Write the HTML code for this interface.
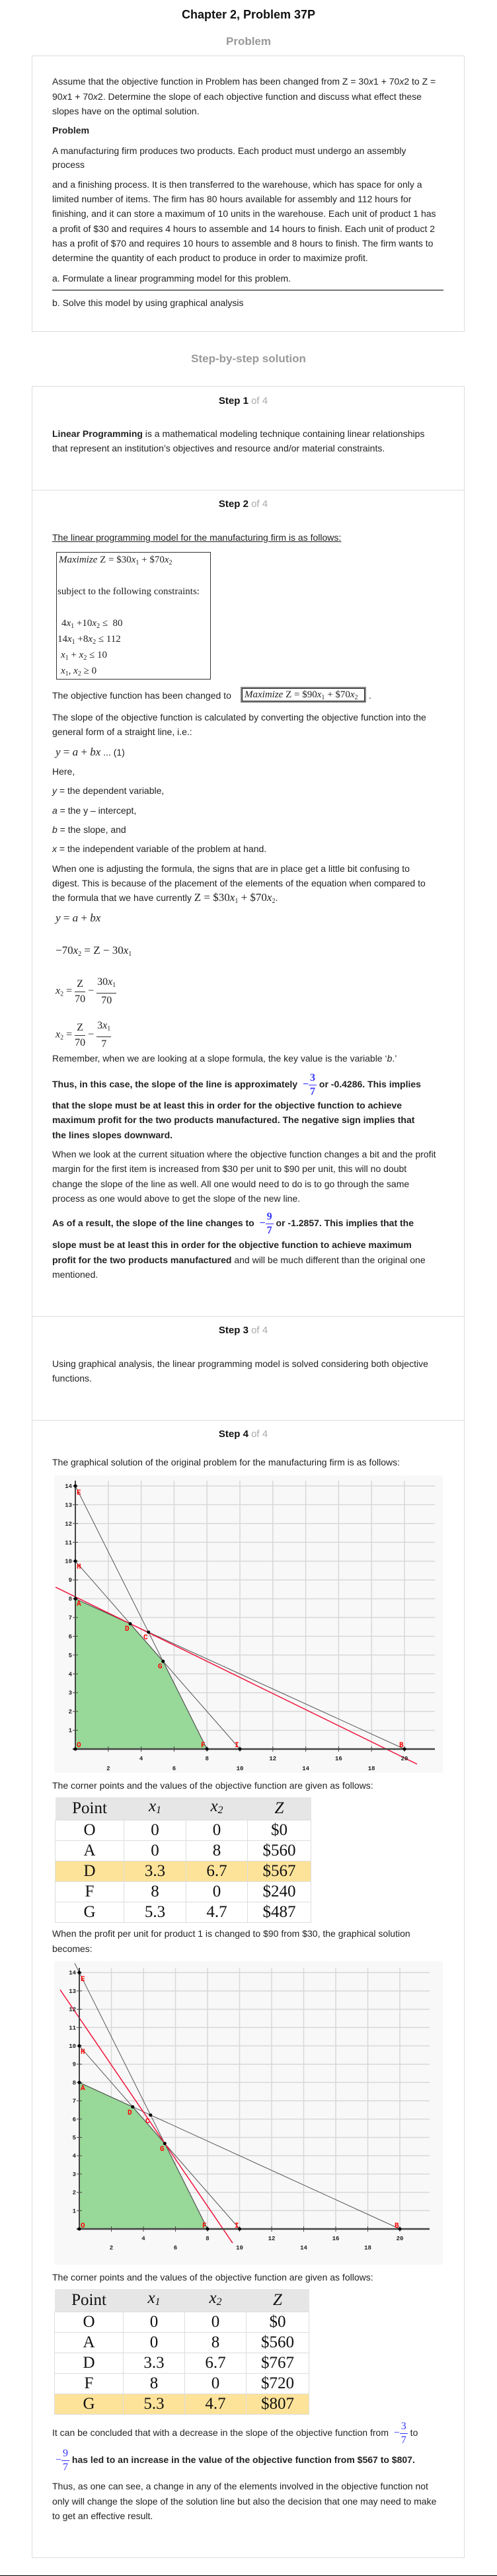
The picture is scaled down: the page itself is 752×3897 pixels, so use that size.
<!DOCTYPE html>
<html><head><meta charset="utf-8">
<style>
*{margin:0;padding:0;box-sizing:border-box}
body{width:752px;height:3897px;position:relative;background:#fff;font-family:"Liberation Sans",Arial,sans-serif;color:#222;overflow:hidden;border-bottom:1px solid #000}
.a{position:absolute}
.t{position:absolute;left:79px;font-size:14px;line-height:22px;white-space:nowrap;color:#222}
.b{font-weight:bold}
.c{position:absolute;left:0;width:752px;text-align:center;font-weight:bold}
.box{position:absolute;left:48px;width:655px;border:1px solid #ddd}
.div{position:absolute;left:48px;width:655px;border-top:1px solid #ddd}
.step{position:absolute;left:48px;width:640px;text-align:center;font-size:15px;font-weight:bold;color:#111;line-height:20px}
.step span{color:#aaa;font-weight:normal}
.m{font-family:"Liberation Serif","Times New Roman",serif;font-size:17px;color:#222;white-space:nowrap}
.m i{font-style:italic}
.mb{font-size:15px}
sub{font-size:10px;vertical-align:-3px}
.fr{display:inline-block;vertical-align:middle;text-align:center;font-family:"Liberation Serif",serif;font-size:16px;line-height:22px}
.fr .n{display:block;border-bottom:1px solid #333;padding:0 1px}
.bf{display:inline-block;vertical-align:middle;text-align:center;font-family:"Liberation Serif",serif;font-size:16px;line-height:20px;color:#33f}
.bf .n{display:block;border-bottom:1px solid #33f;padding:0 2px}
table{position:absolute;border-collapse:collapse;font-family:"Liberation Serif",serif;font-size:25px}
td,th{text-align:center;border:1px solid #ddd;height:31px;line-height:28px;font-weight:normal;color:#111}
th{background:#e6e6e6;border:none;height:33px}
th i,td i{font-style:italic}
.hl td{background:#fde39a}
</style></head><body>

<div class="c" style="top:11px;font-size:18px;line-height:22px;color:#111">Chapter 2, Problem 37P</div>
<div class="c" style="top:52px;font-size:17px;line-height:22px;color:#999">Problem</div>

<div class="box" style="top:84px;height:418px"></div>
<div class="t" style="top:112px">Assume that the objective function in Problem has been changed from Z = 30<i>x</i>1 + 70<i>x</i>2 to Z =</div>
<div class="t" style="top:135px">90<i>x</i>1 + 70<i>x</i>2. Determine the slope of each objective function and discuss what effect these</div>
<div class="t" style="top:157px">slopes have on the optimal solution.</div>
<div class="t b" style="top:186px">Problem</div>
<div class="t" style="top:217px">A manufacturing firm produces two products. Each product must undergo an assembly</div>
<div class="t" style="top:238px">process</div>
<div class="t" style="top:268px">and a finishing process. It is then transferred to the warehouse, which has space for only a</div>
<div class="t" style="top:290px">limited number of items. The firm has 80 hours available for assembly and 112 hours for</div>
<div class="t" style="top:312px">finishing, and it can store a maximum of 10 units in the warehouse. Each unit of product 1 has</div>
<div class="t" style="top:335px">a profit of $30 and requires 4 hours to assemble and 14 hours to finish. Each unit of product 2</div>
<div class="t" style="top:357px">has a profit of $70 and requires 10 hours to assemble and 8 hours to finish. The firm wants to</div>
<div class="t" style="top:379px">determine the quantity of each product to produce in order to maximize profit.</div>
<div class="t" style="top:410px">a. Formulate a linear programming model for this problem.</div>
<div class="a" style="left:79px;top:438px;width:592px;height:2px;background:#777"></div>
<div class="t" style="top:447px">b. Solve this model by using graphical analysis</div>

<div class="c" style="top:532px;font-size:17px;line-height:22px;color:#999">Step-by-step solution</div>

<div class="box" style="top:584px;height:3286px"></div>
<div class="step" style="top:597px">Step 1 <span>of 4</span></div>
<div class="t" style="top:645px"><b>Linear Programming</b> is a mathematical modeling technique containing linear relationships</div>
<div class="t" style="top:667px">that represent an institution’s objectives and resource and/or material constraints.</div>
<div class="div" style="top:741px"></div>
<div class="step" style="top:753px">Step 2 <span>of 4</span></div>
<div class="t" style="top:802px;text-decoration:underline">The linear programming model for the manufacturing firm is as follows:</div>

<div class="a" style="left:85px;top:835px;width:234px;height:193px;border:1px solid #333"></div>
<div class="a m mb" style="left:89px;top:836px;line-height:22px"><i>Maximize</i> Z = $30<i>x</i><sub>1</sub> + $70<i>x</i><sub>2</sub></div>
<div class="a m mb" style="left:87px;top:884px;line-height:22px">subject to the following constraints:</div>
<div class="a m mb" style="left:93px;top:932px;line-height:22px">4<i>x</i><sub>1</sub> +10<i>x</i><sub>2</sub> ≤ &nbsp;80</div>
<div class="a m mb" style="left:87px;top:956px;line-height:22px">14<i>x</i><sub>1</sub> +8<i>x</i><sub>2</sub> ≤ 112</div>
<div class="a m mb" style="left:92px;top:980px;line-height:22px"><i>x</i><sub>1</sub> + <i>x</i><sub>2</sub> ≤ 10</div>
<div class="a m mb" style="left:92px;top:1004px;line-height:22px"><i>x</i><sub>1</sub>, <i>x</i><sub>2</sub> ≥ 0</div>

<div class="t" style="top:1041px">The objective function has been changed to</div>
<div class="a m mb" style="left:364px;top:1039px;width:190px;height:24px;border:2px solid #888;outline:1px solid #222;outline-offset:-3px;line-height:20px;padding-left:4px"><i>Maximize</i> Z = $90<i>x</i><sub>1</sub> + $70<i>x</i><sub>2</sub></div>
<div class="t" style="top:1041px;left:558px">.</div>
<div class="t" style="top:1074px">The slope of the objective function is calculated by converting the objective function into the</div>
<div class="t" style="top:1096px">general form of a straight line, i.e.:</div>
<div class="t" style="top:1127px;left:84px"><span class="m"><i>y</i> = <i>a</i> + <i>bx</i></span> ... (1)</div>
<div class="t" style="top:1156px">Here,</div>
<div class="t" style="top:1185px"><i>y</i> = the dependent variable,</div>
<div class="t" style="top:1215px"><i>a</i> = the y – intercept,</div>
<div class="t" style="top:1244px"><i>b</i> = the slope, and</div>
<div class="t" style="top:1273px"><i>x</i> = the independent variable of the problem at hand.</div>
<div class="t" style="top:1303px">When one is adjusting the formula, the signs that are in place get a little bit confusing to</div>
<div class="t" style="top:1325px">digest. This is because of the placement of the elements of the equation when compared to</div>
<div class="t" style="top:1347px">the formula that we have currently <span class="m">Z = $30<i>x</i><sub>1</sub> + $70<i>x</i><sub>2</sub></span>.</div>
<div class="t m" style="top:1378px;left:84px"><i>y</i> = <i>a</i> + <i>bx</i></div>
<div class="t m" style="top:1427px;left:84px">−70<i>x</i><sub>2</sub> = Z − 30<i>x</i><sub>1</sub></div>
<div class="a m" style="left:84px;top:1475px;font-size:16px;line-height:22px"><i>x</i><sub>2</sub> = <span class="fr"><span class="n">Z</span><span>70</span></span> − <span class="fr"><span class="n">30<i>x</i><sub>1</sub></span><span>70</span></span></div>
<div class="a m" style="left:84px;top:1541px;font-size:16px;line-height:22px"><i>x</i><sub>2</sub> = <span class="fr"><span class="n">Z</span><span>70</span></span> − <span class="fr"><span class="n">3<i>x</i><sub>1</sub></span><span>7</span></span></div>
<div class="t" style="top:1590px">Remember, when we are looking at a slope formula, the key value is the variable ‘<i>b</i>.’</div>
<div class="t b" style="top:1620px;line-height:40px">Thus, in this case, the slope of the line is approximately &nbsp;<span class="bf">−<span style="display:inline-block;vertical-align:middle"><span class="n">3</span><span>7</span></span></span> or -0.4286. This implies</div>
<div class="t b" style="top:1661px">that the slope must be at least this in order for the objective function to achieve</div>
<div class="t b" style="top:1683px">maximum profit for the two products manufactured. The negative sign implies that</div>
<div class="t b" style="top:1706px">the lines slopes downward.</div>
<div class="t" style="top:1735px">When we look at the current situation where the objective function changes a bit and the profit</div>
<div class="t" style="top:1757px">margin for the first item is increased from $30 per unit to $90 per unit, this will no doubt</div>
<div class="t" style="top:1780px">change the slope of the line as well. All one would need to do is to go through the same</div>
<div class="t" style="top:1802px">process as one would above to get the slope of the new line.</div>
<div class="t b" style="top:1830px;line-height:40px">As of a result, the slope of the line changes to &nbsp;<span class="bf">−<span style="display:inline-block;vertical-align:middle"><span class="n">9</span><span>7</span></span></span> or -1.2857. This implies that the</div>
<div class="t" style="top:1872px"><b>slope must be at least this in order for the objective function to achieve maximum</b></div>
<div class="t" style="top:1895px"><b>profit for the two products manufactured</b> and will be much different than the original one</div>
<div class="t" style="top:1917px">mentioned.</div>

<div class="div" style="top:1991px"></div>
<div class="step" style="top:2003px">Step 3 <span>of 4</span></div>
<div class="t" style="top:2052px">Using graphical analysis, the linear programming model is solved considering both objective</div>
<div class="t" style="top:2074px">functions.</div>
<div class="div" style="top:2148px"></div>
<div class="step" style="top:2160px">Step 4 <span>of 4</span></div>
<div class="t" style="top:2201px">The graphical solution of the original problem for the manufacturing firm is as follows:</div>

<svg class="a" style="left:82px;top:2232px" width="588" height="450" viewBox="0 0 588 450" font-family="Liberation Mono,monospace" font-weight="bold">
<rect width="588" height="450" fill="#f8f8f8"/>
<g stroke="#d8d8d8" stroke-width="1.5">
<path d="M81.8 8V414M131.6 8V414M181.4 8V414M231.2 8V414M281 8V414M330.8 8V414M380.6 8V414M430.4 8V414M480.2 8V414M530 8V414"/>
<path d="M32 16H576M32 44.4H576M32 72.8H576M32 101.3H576M32 129.7H576M32 158.1H576M32 186.6H576M32 215H576M32 243.4H576M32 271.8H576M32 300.3H576M32 328.7H576M32 357.1H576M32 385.6H576"/>
</g>
<polygon points="32,414 32,186.6 115,224.5 164.8,281.3 231.2,414" fill="#98d898" stroke="#333" stroke-width="1"/>
<g stroke="#555" stroke-width="1" fill="none">
<path d="M32 16L231.2 414M32 129.7L281 414M32 186.6L530 414"/>
</g>
<path d="M2.1 169.1L548.9 436.7" stroke="#f0143c" stroke-width="1.5"/>
<path d="M32 8V414" stroke="#444" stroke-width="2"/>
<path d="M28 414H576" stroke="#444" stroke-width="2.5"/>
<g stroke="#444" stroke-width="1">
<path d="M28 16H36M28 44.4H36M28 72.8H36M28 101.3H36M28 129.7H36M28 158.1H36M28 186.6H36M28 215H36M28 243.4H36M28 271.8H36M28 300.3H36M28 328.7H36M28 357.1H36M28 385.6H36"/>
<path d="M81.8 410V418M131.6 410V418M181.4 410V418M231.2 410V418M281 410V418M330.8 410V418M380.6 410V418M430.4 410V418M480.2 410V418M530 410V418"/>
</g>
<g fill="#000"><circle cx="32" cy="16" r="2.5"/><circle cx="32" cy="129.7" r="2.5"/><circle cx="32" cy="186.6" r="2.5"/><circle cx="115" cy="224.5" r="2.5"/><circle cx="142.7" cy="237.1" r="2.5"/><circle cx="164.8" cy="281.3" r="2.5"/><circle cx="32" cy="414" r="2.5"/><circle cx="231.2" cy="414" r="2.5"/><circle cx="281" cy="414" r="2.5"/><circle cx="530" cy="414" r="2.5"/></g>
<g font-size="9" fill="#222" text-anchor="end">
<text x="27" y="19">14</text><text x="27" y="47.4">13</text><text x="27" y="75.8">12</text><text x="27" y="104.3">11</text><text x="27" y="132.7">10</text><text x="27" y="161.1">9</text><text x="27" y="189.6">8</text><text x="27" y="218">7</text><text x="27" y="246.4">6</text><text x="27" y="274.8">5</text><text x="27" y="303.3">4</text><text x="27" y="331.7">3</text><text x="27" y="360.1">2</text><text x="27" y="388.6">1</text>
</g>
<g font-size="9" fill="#222" text-anchor="middle">
<text x="131.6" y="431">4</text><text x="231.2" y="431">8</text><text x="330.8" y="431">12</text><text x="430.4" y="431">16</text><text x="530" y="431">20</text>
<text x="81.8" y="446">2</text><text x="181.4" y="446">6</text><text x="281" y="446">10</text><text x="380.6" y="446">14</text><text x="480.2" y="446">18</text>
</g>
<g font-size="11" fill="#f00">
<text x="34" y="29">E</text><text x="34" y="141">H</text><text x="34" y="197">A</text><text x="107" y="235">D</text><text x="135" y="248">C</text><text x="157" y="292">G</text><text x="34" y="411">O</text><text x="222" y="411">F</text><text x="273" y="411">I</text><text x="522" y="411">B</text>
</g>
</svg>

<div class="t" style="top:2690px">The corner points and the values of the objective function are given as follows:</div>
<table style="left:83px;top:2719px;width:388px">
<tr><th style="width:104px">Point</th><th style="width:94px"><i>x<sub style="font-size:16px">1</sub></i></th><th style="width:93px"><i>x<sub style="font-size:16px">2</sub></i></th><th><i>Z</i></th></tr>
<tr><td>O</td><td>0</td><td>0</td><td>$0</td></tr>
<tr><td>A</td><td>0</td><td>8</td><td>$560</td></tr>
<tr class="hl"><td>D</td><td>3.3</td><td>6.7</td><td>$567</td></tr>
<tr><td>F</td><td>8</td><td>0</td><td>$240</td></tr>
<tr><td>G</td><td>5.3</td><td>4.7</td><td>$487</td></tr>
</table>
<div class="t" style="top:2914px">When the profit per unit for product 1 is changed to $90 from $30, the graphical solution</div>
<div class="t" style="top:2937px">becomes:</div>

<svg class="a" style="left:82px;top:2967px" width="588" height="459" viewBox="0 0 588 459" font-family="Liberation Mono,monospace" font-weight="bold">
<rect width="588" height="459" fill="#f8f8f8"/>
<g stroke="#d8d8d8" stroke-width="1.5">
<path d="M86.5 10V405M135 10V405M183.5 10V405M232 10V405M280.5 10V405M329 10V405M377.5 10V405M426 10V405M474.5 10V405M523 10V405"/>
<path d="M38 17.2H568M38 44.9H568M38 72.6H568M38 100.3H568M38 128H568M38 155.7H568M38 183.4H568M38 211.1H568M38 238.8H568M38 266.5H568M38 294.2H568M38 321.9H568M38 349.6H568M38 377.3H568"/>
</g>
<polygon points="38,405 38,183.4 118.8,220.3 167.3,275.7 232,405" fill="#98d898" stroke="#333" stroke-width="1"/>
<g stroke="#555" stroke-width="1" fill="none">
<path d="M38 17.2L232 405M38 128L280.5 405M38 183.4L523 405M38 17.2L31 3"/>
</g>
<path d="M8.9 43L270 426.3" stroke="#f0143c" stroke-width="1.5"/>
<path d="M38 10V405" stroke="#444" stroke-width="2"/>
<path d="M34 405H568" stroke="#444" stroke-width="2.5"/>
<g stroke="#444" stroke-width="1">
<path d="M34 17.2H42M34 44.9H42M34 72.6H42M34 100.3H42M34 128H42M34 155.7H42M34 183.4H42M34 211.1H42M34 238.8H42M34 266.5H42M34 294.2H42M34 321.9H42M34 349.6H42M34 377.3H42"/>
<path d="M86.5 401V409M135 401V409M183.5 401V409M232 401V409M280.5 401V409M329 401V409M377.5 401V409M426 401V409M474.5 401V409M523 401V409"/>
</g>
<g fill="#000"><circle cx="38" cy="17.2" r="2.5"/><circle cx="38" cy="128" r="2.5"/><circle cx="38" cy="183.4" r="2.5"/><circle cx="118.8" cy="220.3" r="2.5"/><circle cx="145.8" cy="232.7" r="2.5"/><circle cx="167.3" cy="275.7" r="2.5"/><circle cx="38" cy="405" r="2.5"/><circle cx="232" cy="405" r="2.5"/><circle cx="280.5" cy="405" r="2.5"/><circle cx="523" cy="405" r="2.5"/></g>
<g font-size="9" fill="#222" text-anchor="end">
<text x="33" y="20.2">14</text><text x="33" y="47.9">13</text><text x="33" y="75.6">12</text><text x="33" y="103.3">11</text><text x="33" y="131">10</text><text x="33" y="158.7">9</text><text x="33" y="186.4">8</text><text x="33" y="214.1">7</text><text x="33" y="241.8">6</text><text x="33" y="269.5">5</text><text x="33" y="297.2">4</text><text x="33" y="324.9">3</text><text x="33" y="352.6">2</text><text x="33" y="380.3">1</text>
</g>
<g font-size="9" fill="#222" text-anchor="middle">
<text x="135" y="422">4</text><text x="232" y="422">8</text><text x="329" y="422">12</text><text x="426" y="422">16</text><text x="523" y="422">20</text>
<text x="86.5" y="436">2</text><text x="183.5" y="436">6</text><text x="280.5" y="436">10</text><text x="377.5" y="436">14</text><text x="474.5" y="436">18</text>
</g>
<g font-size="11" fill="#f00">
<text x="40" y="30">E</text><text x="40" y="140">H</text><text x="40" y="195">A</text><text x="111" y="232">D</text><text x="138" y="245">C</text><text x="160" y="287">G</text><text x="40" y="403">O</text><text x="224" y="403">F</text><text x="273" y="403">I</text><text x="515" y="403">B</text>
</g>
</svg>

<div class="t" style="top:3434px">The corner points and the values of the objective function are given as follows:</div>
<table style="left:82px;top:3463px;width:386px">
<tr><th style="width:104px">Point</th><th style="width:93px"><i>x<sub style="font-size:16px">1</sub></i></th><th style="width:93px"><i>x<sub style="font-size:16px">2</sub></i></th><th><i>Z</i></th></tr>
<tr><td>O</td><td>0</td><td>0</td><td>$0</td></tr>
<tr><td>A</td><td>0</td><td>8</td><td>$560</td></tr>
<tr><td>D</td><td>3.3</td><td>6.7</td><td>$767</td></tr>
<tr><td>F</td><td>8</td><td>0</td><td>$720</td></tr>
<tr class="hl"><td>G</td><td>5.3</td><td>4.7</td><td>$807</td></tr>
</table>

<div class="t" style="top:3660px;line-height:40px">It can be concluded that with a decrease in the slope of the objective function from &nbsp;<span class="bf">−<span style="display:inline-block;vertical-align:middle"><span class="n">3</span><span>7</span></span></span> to</div>
<div class="t" style="top:3701px;left:84px;line-height:40px"><span class="bf">−<span style="display:inline-block;vertical-align:middle"><span class="n">9</span><span>7</span></span></span> <b>has led to an increase in the value of the objective function from $567 to $807.</b></div>
<div class="t" style="top:3750px">Thus, as one can see, a change in any of the elements involved in the objective function not</div>
<div class="t" style="top:3773px">only will change the slope of the solution line but also the decision that one may need to make</div>
<div class="t" style="top:3795px">to get an effective result.</div>

</body></html>
